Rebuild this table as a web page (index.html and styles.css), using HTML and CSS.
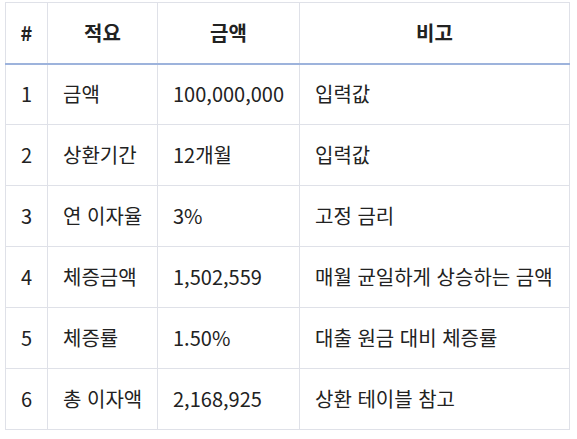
FILE: index.html
```html
<!DOCTYPE html>
<html lang="ko">
<head>
<meta charset="utf-8">
<link rel="stylesheet" href="styles.css">
</head>
<body>
<table class="tbl">
  <colgroup>
    <col class="c1"><col class="c2"><col class="c3"><col class="c4">
  </colgroup>
  <thead>
    <tr><th>#</th><th>적요</th><th>금액</th><th>비고</th></tr>
  </thead>
  <tbody>
    <tr><td>1</td><td>금액</td><td>100,000,000</td><td>입력값</td></tr>
    <tr><td>2</td><td>상환기간</td><td>12개월</td><td>입력값</td></tr>
    <tr><td>3</td><td>연 이자율</td><td>3%</td><td>고정 금리</td></tr>
    <tr><td>4</td><td>체증금액</td><td>1,502,559</td><td>매월 균일하게 상승하는 금액</td></tr>
    <tr><td>5</td><td>체증률</td><td>1.50%</td><td>대출 원금 대비 체증률</td></tr>
    <tr><td>6</td><td>총 이자액</td><td>2,168,925</td><td>상환 테이블 참고</td></tr>
  </tbody>
</table>
</body>
</html>
```
FILE: styles.css
```css
html, body {
  margin: 0;
  background: #ffffff;
}
body {
  padding: 2px 8px 0 5px;
  font-family: "Noto Sans CJK KR", "Noto Sans", sans-serif;
  font-size: 20px;
  color: #222222;
}
.tbl {
  border-collapse: collapse;
  table-layout: fixed;
  width: 564px;
}
.c1 { width: 42px; }
.c2 { width: 110px; }
.c3 { width: 142px; }
.c4 { width: 270px; }
.tbl th, .tbl td {
  border: 1px solid #dfe1e8;
  padding: 0 15px;
  box-sizing: border-box;
  white-space: nowrap;
  line-height: 1.2;
}
.tbl th {
  font-weight: 700;
  text-align: center;
  border-bottom: 2px solid #9db3dc;
  height: 61px;
}
.tbl td {
  text-align: left;
  height: 61px;
}
.tbl th:first-child, .tbl td:first-child {
  padding: 0;
  text-align: center;
}
```
